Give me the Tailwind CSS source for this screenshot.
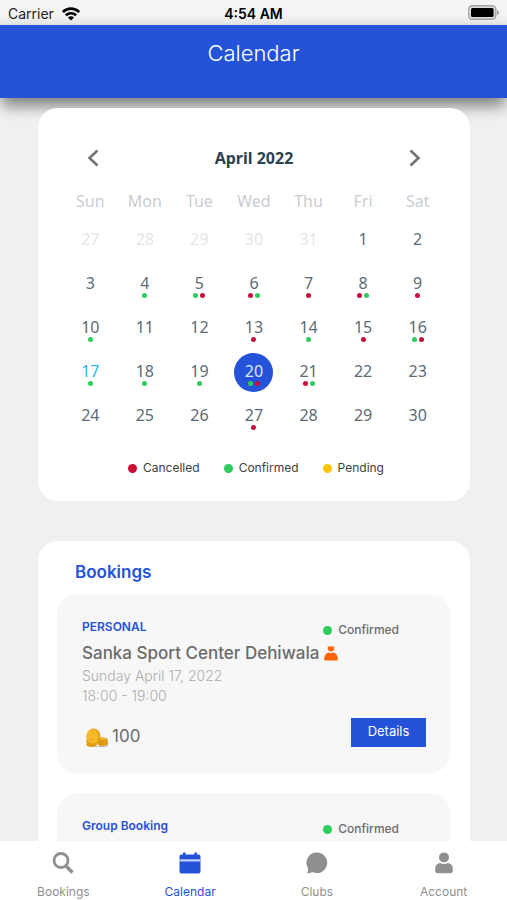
<!DOCTYPE html>
<html lang="en">
<head>
  <meta charset="UTF-8" />
  <meta name="viewport" content="width=device-width, initial-scale=1.0"/>
  <title>Calendar</title>
  <script src="https://cdn.jsdelivr.net/npm/@tailwindcss/browser@4"></script>
</head>
<body class="bg-[#f0f0f0] font-['Inter',sans-serif] h-dvh flex flex-col overflow-hidden">

  <!-- Status Bar -->
  <div class="grid grid-cols-3 items-center h-[25px] px-2 bg-linear-to-b from-[#f4f4f4] from-60% to-[#e4e4e4] text-sm text-[#222] shrink-0">
    <div class="flex items-center gap-2 pt-[3px]">
      <span>Carrier</span>
      <svg class="w-[18px] h-[14px]" viewBox="0 0 18 14" fill="none" stroke="#000" stroke-width="2.6">
        <path d="M.8 5C5.500 .5 12.500 .5 17.200 5"/>
        <path d="M3.800 8.200c2.900-2.700 7.500-2.700 10.400 0"/>
        <path d="M9 13.500 5.900 10.400c1.700-1.500 4.500-1.500 6.200 0z" fill="#000" stroke="none"/>
      </svg>
    </div>
    <div class="text-center font-semibold text-black pt-[3px]">4:54 AM</div>
    <svg class="w-[31px] h-[15px] justify-self-end" viewBox="0 0 31 15">
      <rect x=".8" y=".8" width="27" height="13.400" rx="3.500" fill="#ddd" stroke="#a3a3a3" stroke-width="1.400"/>
      <rect x="3" y="3" width="22.600" height="9" rx="1.500" fill="#000"/>
      <path d="M29 5v5c1.300-.4 2-1.300 2-2.500s-.7-2.100-2-2.500z" fill="#a3a3a3"/>
    </svg>
  </div>

  <!-- Header -->
  <header class="h-[73px] pt-3 bg-[#2452d9] text-center shadow-[0_10px_14px_-2px_#7d817a] shrink-0">
    <h1 class="text-[22px] leading-8 font-light text-white">Calendar</h1>
  </header>

  <!-- Main Content -->
  <main class="relative flex-1 min-h-0 overflow-hidden pl-[38px] pr-[37px] pt-[10px] space-y-10">

    <!-- Month -->
    <section class="bg-white rounded-[20px] pt-8 px-[25px] pb-[23px] font-['Noto_Sans','Open_Sans',sans-serif]">
      <div class="flex items-center justify-between h-9 px-5 mb-2">
        <button type="button" aria-label="Previous month" class="w-5 h-5 flex items-center justify-center">
          <svg class="w-3 h-[18px]" viewBox="0 0 12 18" fill="none" stroke="#737373" stroke-width="2.600"><path d="M10.500 1.500 2.500 9l8 7.500"/></svg>
        </button>
        <h2 class="text-base font-bold text-[#2d4150]">April 2022</h2>
        <button type="button" aria-label="Next month" class="w-5 h-5 flex items-center justify-center">
          <svg class="w-3 h-[18px]" viewBox="0 0 12 18" fill="none" stroke="#737373" stroke-width="2.600"><path d="M1.500 1.500 9.500 9l-8 7.500"/></svg>
        </button>
      </div>

      <table class="w-full table-fixed text-center text-base">
        <thead>
          <tr class="h-[34px] text-[#c9cdd2]">
            <th class="font-normal">Sun</th>
            <th class="font-normal">Mon</th>
            <th class="font-normal">Tue</th>
            <th class="font-normal">Wed</th>
            <th class="font-normal">Thu</th>
            <th class="font-normal">Fri</th>
            <th class="font-normal">Sat</th>
          </tr>
        </thead>
        <tbody id="days"></tbody>
      </table>

      <!-- Legend -->
      <ul class="flex justify-center gap-6 mt-5 h-5 pl-1 font-['Inter',sans-serif] text-xs text-[#404040]">
        <li class="flex items-center gap-[6px]"><span class="w-[9px] h-[9px] rounded-full bg-[#cf1035]"></span>Cancelled</li>
        <li class="flex items-center gap-[6px]"><span class="w-[9px] h-[9px] rounded-full bg-[#2ecc5e]"></span>Confirmed</li>
        <li class="flex items-center gap-[6px]"><span class="w-[9px] h-[9px] rounded-full bg-[#fcc404]"></span>Pending</li>
      </ul>
    </section>

    <!-- Bookings -->
    <section class="bg-white rounded-[20px] pt-[19px] pl-[19px] pr-5 pb-5">
      <h2 class="text-[17px] leading-6 font-semibold text-[#2452d9] px-[18px] mb-[10px]">Bookings</h2>
      <div class="space-y-5">

        <article class="bg-[#f7f7f7] rounded-[20px] pt-6 pl-[25px] pr-6 pb-[25px] text-[#6b6b6b]">
          <div class="flex justify-between">
            <h3 class="text-xs leading-[18px] font-semibold text-[#2452d9]">PERSONAL</h3>
            <p class="flex items-center gap-[6px] text-xs font-medium pt-1 pr-[27px]"><span class="w-[9px] h-[9px] rounded-full bg-[#2ecc5e]"></span>Confirmed</p>
          </div>
          <p class="flex items-center gap-[5px] text-[17px] leading-6 font-medium pt-[3px]">
            Sanka Sport Center Dehiwala
            <svg class="w-[14px] h-[15px]" viewBox="0 0 14 15" fill="#fb6508">
              <path d="M3.800.5h6.400v1.800c0 2-1.300 3.300-3.200 3.300S3.800 4.300 3.800 2.300z"/>
              <path d="M4.600 6.400c1.500.9 3.300.9 4.800 0 2.800.8 4.300 3 4.400 6v1.200c0 .6-.3.900-.9.900H1.100c-.6 0-.9-.3-.9-.9v-1.200c.1-3 1.600-5.200 4.400-6z"/>
            </svg>
          </p>
          <div class="text-[14px] leading-5 font-light text-[#adadad] pt-[1px]">
            <p>Sunday April 17, 2022</p>
            <p>18:00 - 19:00</p>
          </div>
          <div class="flex items-center justify-between mt-[10px]">
            <p class="flex items-center gap-[3px] pl-[3px] pt-2 text-[17px] leading-6">
              <svg class="w-6 h-5 mt-1" viewBox="0 0 24 20">
                <path d="M4 18h16l3.500-2.500L22 19H4z" fill="#c4c1c8"/>
                <path d="M13 10.500c3-1.500 7-1.500 9.500.5l.5 5c-3 2.500-7 2.500-10 1z" fill="#dd9a12"/>
                <path d="M15 10.500c2-1 5-1 7 .5-2 1.500-5 1.500-7 0z" fill="#efb62e"/>
                <path d="M1.500 11v6.500c1.500 1.700 7 1.700 9.500.5l3.500-5z" fill="#e09c12"/>
                <ellipse cx="8.500" cy="8.500" rx="7" ry="8" fill="#e6a012"/>
                <ellipse cx="7.500" cy="8.500" rx="6" ry="7" fill="#f6bb2b"/>
                <path d="M5.500 5.500c1.500-1 3-.8 4 .5M5 10.500c1.200 1.500 3 1.500 4.500.5" fill="none" stroke="#e9a81f"/>
              </svg>
              100
            </p>
            <button type="button" class="w-[75px] h-[29px] bg-[#2452d9] text-white text-[13px]">Details</button>
          </div>
        </article>

        <article class="bg-[#f7f7f7] rounded-[20px] pt-6 pl-[25px] pr-6 pb-[25px] text-[#6b6b6b]">
          <div class="flex justify-between">
            <h3 class="text-xs leading-[18px] font-semibold text-[#2452d9]">Group Booking</h3>
            <p class="flex items-center gap-[6px] text-xs font-medium pt-1 pr-[27px]"><span class="w-[9px] h-[9px] rounded-full bg-[#2ecc5e]"></span>Confirmed</p>
          </div>
        </article>

      </div>
    </section>
  </main>

  <!-- Tab Bar -->
  <nav class="relative grid grid-cols-4 h-[59px] bg-white text-xs text-[#8f8f8f] shrink-0">
    <a href="#bookings" class="flex flex-col items-center justify-between pt-[11px]">
      <svg class="w-[22px] h-[22px]" viewBox="0 0 22 22" fill="none" stroke="#8f8f8f"><circle cx="9" cy="8.500" r="7" stroke-width="2.800"/><path d="m14 14 6.500 6.500" stroke-width="3.400"/></svg>
      Bookings
    </a>
    <a href="#calendar" class="flex flex-col items-center justify-between pt-[11px] text-[#2452d9]">
      <svg class="w-[22px] h-[22px]" viewBox="0 0 22 22"><path d="M4 .5h2.600v2h8.800v-2H18v2h1.500c1.200 0 2 .8 2 2v15c0 1.200-.8 2-2 2h-17c-1.200 0-2-.8-2-2v-15c0-1.200.8-2 2-2H4z" fill="#2452d9"/><path d="M.5 7.300h21v2.200H.5z" fill="#c3d0f5"/></svg>
      Calendar
    </a>
    <a href="#clubs" class="flex flex-col items-center justify-between pt-[11px]">
      <svg class="w-[22px] h-[22px]" viewBox="0 0 22 22" fill="#8f8f8f"><path d="M11 .500a10.300 10.300 0 1 1-4.700 19.500C4.500 21 2.500 21.500.8 21.200c1.200-1.200 1.500-3 1.200-5A10.300 10.300 0 0 1 11 .500z"/></svg>
      Clubs
    </a>
    <a href="#account" class="flex flex-col items-center justify-between pt-[11px]">
      <svg class="w-[22px] h-[22px]" viewBox="0 0 22 22" fill="#8f8f8f"><circle cx="11" cy="5.400" r="5"/><path d="M7 11c2.500 1.300 5.500 1.300 8 0 3 .5 4.800 2.500 4.800 5.500V19c0 1.300-.9 2.200-2.200 2.200H4.400c-1.300 0-2.200-.9-2.200-2.200v-2.500c0-3 1.800-5 4.800-5.500z"/></svg>
      Account
    </a>
  </nav>

<script>
  // c = confirmed, x = cancelled
  const marks = {
    4: 'c', 5: 'cx', 6: 'xc', 7: 'x', 8: 'xc', 9: 'x', 10: 'c', 13: 'x', 14: 'c', 15: 'x',
    16: 'cx', 17: 'c', 18: 'c', 19: 'c', 20: 'cx', 21: 'xc', 27: 'x'
  };
  const dotColor = { c: 'bg-[#2ecc5e]', x: 'bg-[#c4103c]' };
  const today = 17;
  const selected = 20;

  let html = '';
  for (let i = 0; i < 35; i++) {
    // the first five cells still belong to March
    const outside = i < 5;
    const day = outside ? 27 + i : i - 4;
    let color = 'text-[#5c6b73]';
    if (outside) color = 'text-[#e3e6e9]';
    else if (day === today) color = 'text-[#29b6e8]';
    else if (day === selected) color = 'bg-[#2452d9] text-[#dfe6fa]';
    const dots = outside ? '' : [...(marks[day] || '')]
      .map(m => `<span class="w-[5px] h-[5px] rounded-full ${dotColor[m]}"></span>`).join('');

    if (i % 7 === 0) html += '<tr class="h-11">';
    html += `<td class="p-0"><button type="button" class="flex flex-col items-center w-[39px] h-[39px] pt-2 mx-auto rounded-full leading-5 ${color}">${day}<span class="flex gap-[2px]">${dots}</span></button></td>`;
    if (i % 7 === 6) html += '</tr>';
  }
  document.getElementById('days').innerHTML = html;
</script>

</body>
</html>
